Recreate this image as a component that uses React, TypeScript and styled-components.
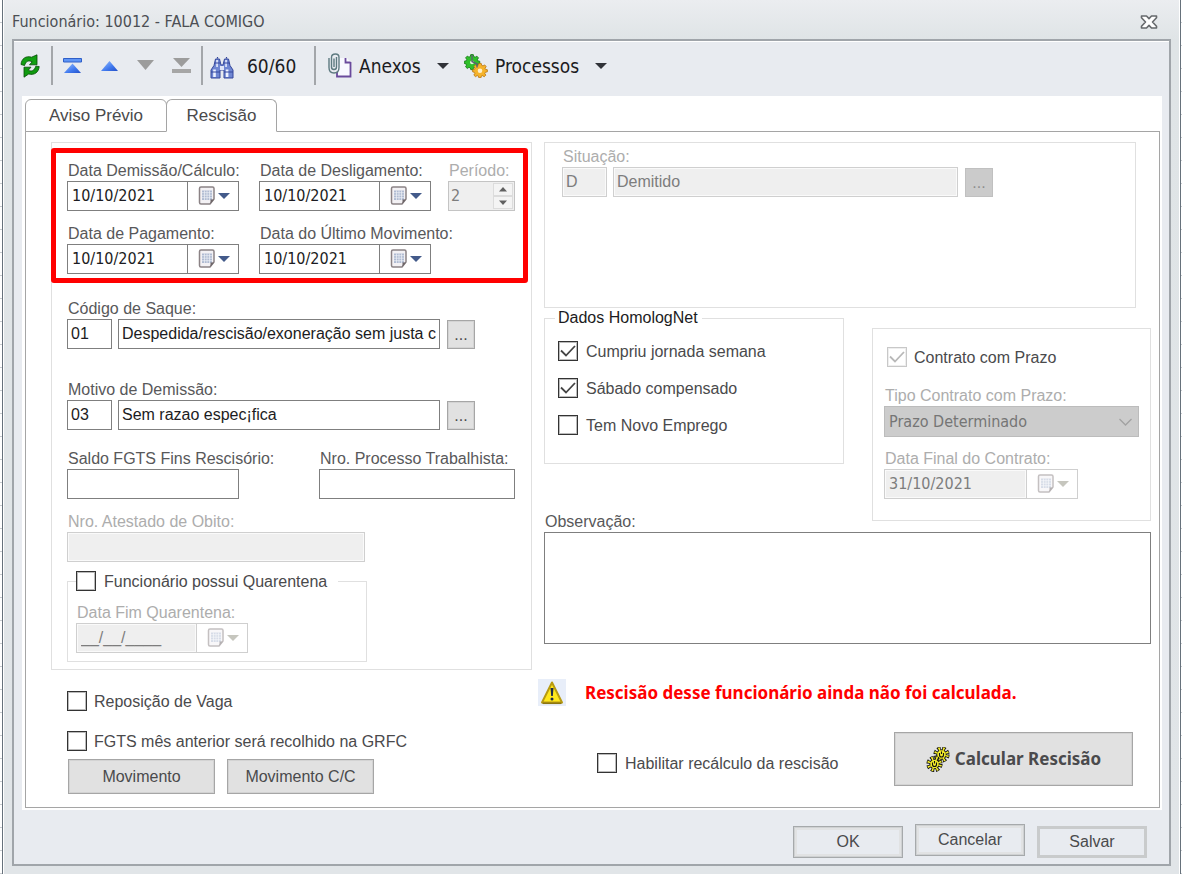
import React, { useId } from "react";
import styled, { createGlobalStyle, css } from "styled-components";

const sans = `"Liberation Sans", Arial, sans-serif`;
const tahoma = `"DejaVu Sans Condensed", Tahoma, sans-serif`;
const strong = `"Noto Sans", Tahoma, sans-serif`;

const GlobalStyle = createGlobalStyle`
  *, *::before, *::after { box-sizing: border-box; }
  body { margin: 0; background: #fff; font: 16px/20px ${sans}; color: #4a4a4c; }
  button, input, select, textarea { font: inherit; margin: 0; border-radius: 0; }
  svg { display: block; flex: none; }
`;

const Desktop = styled.div`
  padding: 0 1px 1px 2px;
  background: repeating-linear-gradient(#fff 0 22px, #c9ccd0 22px 23px);
`;

const Window = styled.main`
  display: flex;
  flex-direction: column;
  min-height: calc(100vh - 1px);
  padding: 0 9px 8px;
  border: solid #66717b;
  border-width: 0 1px;
  background: linear-gradient(#ebedf0, #dfe4e6 40px, #e1e5e8);
  box-shadow: inset 1px 0 #fff, inset -1px 0 #fff;
`;

const TitleBar = styled.header`
  display: flex;
  align-items: center;
  justify-content: space-between;
  height: 39px;
  padding: 4px 13px 0 0;
`;

const Title = styled.h1`
  margin: 0;
  font: 16px/20px ${tahoma};
  color: #4c4f54;
`;

const IconButton = styled.button`
  display: grid;
  place-items: center;
  padding: 0;
  border: 0;
  background: none;
`;

const Frame = styled.div`
  flex: 1;
  padding: 2px 7px 6px 8px;
  border: 2px solid #a0a5aa;
  background: #e8ebf0;
  box-shadow: inset 0 1px #fff;
`;

const Toolbar = styled.div`
  display: flex;
  align-items: center;
  height: 53px;
  margin-left: -2px;
  padding-bottom: 8px;
  font: 19px/20px ${tahoma};
  color: #1c1c22;
`;

const Separator = styled.span<{ $after: number }>`
  width: 2px;
  height: 39px;
  margin: 0 ${(p) => p.$after}px 0 10px;
  background: #a3a6aa;
`;

const ToolButton = styled.button<{ $width?: number; $gap?: number }>`
  display: flex;
  align-items: center;
  gap: ${(p) => p.$gap ?? 7}px;
  width: ${(p) => (p.$width ? `${p.$width}px` : "auto")};
  height: 26px;
  padding: 0;
  border: 0;
  background: none;
  color: inherit;
`;

const Arrow = styled.span`
  margin-left: 9px;
  border: solid transparent;
  border-width: 6px 6px 0;
  border-top-color: #303238;
`;

const Tabs = styled.div`
  padding: 3px 2px 2px 3px;
  background: #fff;
`;

const TabList = styled.div`
  display: flex;
  font-size: 17px;
`;

const Tab = styled.button<{ $width: number; $active?: boolean }>`
  width: ${(p) => p.$width}px;
  height: 33px;
  margin: 0 -1px -1px 0;
  padding: 0;
  border: 1px solid #a5a5a5;
  border-bottom-color: ${(p) => (p.$active ? "#fff" : "#a5a5a5")};
  border-radius: 6px 6px 0 0;
  background: #fff;
  color: #4a4a4c;
  position: relative;
`;

const TabPanel = styled.div`
  display: grid;
  grid-template-columns: 481px 1fr;
  gap: 12px;
  padding: 10px 8px 13px 25px;
  border: 1px solid #a5a5a5;
`;

const Column = styled.div`
  display: flex;
  flex-direction: column;
`;

const box = css`
  border: 1px solid #e0e0e0;
`;

const MainPanel = styled.section`
  ${box}
  padding: 5px 0 7px;
`;

const Highlight = styled.div`
  display: grid;
  grid-template-columns: 172px 172px 64px;
  column-gap: 20px;
  row-gap: 13px;
  margin: 0 3px 0 -1px;
  padding: 8px 0 4px 11px;
  border: 5px solid #f00;
  border-radius: 3px;

  & > :nth-child(3) {
    margin-left: -3px;
  }
`;

const Row = styled.div<{ $top: number; $gap?: number }>`
  display: flex;
  align-items: flex-end;
  gap: ${(p) => p.$gap ?? 6}px;
  margin-top: ${(p) => p.$top}px;
  padding-left: 15px;
`;

const Field = styled.div<{ $width?: number }>`
  display: flex;
  flex-direction: column;
  width: ${(p) => (p.$width ? `${p.$width}px` : "auto")};
`;

const Label = styled.label<{ $muted?: boolean }>`
  padding-left: 1px;
  line-height: 20px;
  white-space: nowrap;
  color: ${(p) => (p.$muted ? "#adadad" : "#58585a")};
`;

const TextInput = styled.input<{ $width?: number }>`
  flex: none;
  width: ${(p) => (p.$width ? `${p.$width}px` : "100%")};
  height: 30px;
  padding: 0 3px;
  border: 1px solid #7f7f7f;
  background: #fff;
  color: #1c1c22;

  &:disabled {
    border-color: #cfcfcf;
    background: #efefef;
    box-shadow: inset 0 0 0 1px #fafafa;
    color: #7d7d7d;
  }
`;

const DateBox = styled.div<{ $disabled?: boolean }>`
  display: flex;
  height: 30px;
  border: 1px solid ${(p) => (p.$disabled ? "#cfcfcf" : "#7f7f7f")};
`;

const DateInput = styled.input<{ $blank?: boolean }>`
  flex: 1;
  min-width: 0;
  padding: 0 4px;
  border: 0;
  background: #fff;
  font: 16px/20px ${(p) => (p.$blank ? sans : tahoma)};
  color: #1c1c22;

  &:disabled {
    background: #efefef;
    box-shadow: inset 0 0 0 1px #fafafa;
    color: #7d7d7d;
  }
`;

const DateButton = styled.button`
  display: flex;
  align-items: center;
  gap: 2px;
  width: 51px;
  padding: 0 0 0 10px;
  border: 0;
  border-left: 1px solid #7f7f7f;
  background: #fff;

  &:disabled {
    border-color: #cfcfcf;
  }
  &:disabled svg {
    opacity: 0.5;
  }
`;

const DateArrow = styled.span<{ $disabled?: boolean }>`
  border: solid transparent;
  border-width: 6px 6px 0;
  border-top-color: ${(p) => (p.$disabled ? "#c6c6be" : "#435a8a")};
`;

const Spin = styled.div`
  display: flex;
  height: 30px;
  padding: 1px;
  border: 1px solid #c4c4c4;
  background: #efefef;
  color: #7d7d7d;
`;

const SpinInput = styled.input`
  flex: 1;
  min-width: 0;
  padding: 0 0 0 1px;
  border: 0;
  background: none;
  color: inherit;
  font: 16px/20px ${tahoma};
  appearance: textfield;

  &::-webkit-inner-spin-button {
    display: none;
  }
`;

const SpinButtons = styled.div`
  display: grid;
  width: 20px;
`;

const SpinButton = styled.button`
  display: grid;
  place-items: center;
  padding: 0;
  border: 1px solid #dcdcdc;
  background: #f4f4f4;
`;

const Button = styled.button<{ $width: number; $height?: number }>`
  display: flex;
  align-items: center;
  justify-content: center;
  gap: 5px;
  flex: none;
  width: ${(p) => p.$width}px;
  height: ${(p) => p.$height ?? 35}px;
  padding: 0;
  border: 1px solid #a6a6a6;
  background: #e1e1e1;
  box-shadow: inset 0 0 0 1px #d3d3d3;
  color: #4a4a4c;
`;

const MoreButton = styled(Button)`
  margin-left: 1px;

  &:disabled {
    border-color: #c0c0c0;
    background: #cbcbcb;
    box-shadow: none;
    color: #8f8f8f;
  }
`;

const CheckLine = styled.div<{ $gap?: number }>`
  display: flex;
  align-items: center;
  gap: ${(p) => p.$gap ?? 7}px;
  height: 20px;
`;

const CheckStack = styled.span`
  display: grid;
  flex: none;
  width: 20px;
  height: 20px;

  & > * {
    grid-area: 1 / 1;
    width: 20px;
    height: 20px;
  }
  & > svg {
    pointer-events: none;
    visibility: hidden;
  }
  & > input:checked + svg {
    visibility: visible;
  }
`;

const CheckInput = styled.input`
  appearance: none;
  border: 1px solid #333;
  outline: 1px solid #bbb;
  outline-offset: -2px;
  background: #fff;

  &:disabled {
    border-color: #c8c8c8;
    outline-color: #eee;
  }
`;

const CheckLabel = styled.label`
  padding-top: 1px;
  white-space: nowrap;
`;

const Quarantine = styled.fieldset`
  ${box}
  width: 300px;
  margin: 9px 0 0 15px;
  padding: 12px 8px 8px;

  legend {
    padding: 0 11px 0 0;
  }
`;

const Situation = styled.section`
  ${box}
  height: 166px;
  margin-right: 15px;
  padding: 4px 17px;
`;

const LookupRow = styled.div`
  display: flex;
  align-items: flex-end;
  gap: 6px;
`;

const Middle = styled.div`
  display: flex;
  gap: 28px;
`;

const Homolog = styled.fieldset`
  ${box}
  display: flex;
  flex-direction: column;
  gap: 17px;
  width: 300px;
  height: 156px;
  margin: 0 0 48px;
  padding: 13px 13px 0;

  legend {
    margin-left: -3px;
    padding: 0 4px 0 3px;
    color: #1c1c22;
  }
`;

const Contract = styled.section`
  ${box}
  flex: 1;
  margin: 20px 0 11px;
  padding: 18px 11px 0;
`;

const ContractHeader = styled.div`
  padding: 0 3px 19px;
`;

const SelectStack = styled.div`
  display: grid;
  align-items: center;
  margin-bottom: 12px;

  & > * {
    grid-area: 1 / 1;
  }
  & > svg {
    justify-self: end;
    margin-right: 7px;
    pointer-events: none;
  }
`;

const Select = styled.select`
  appearance: none;
  width: 100%;
  height: 31px;
  padding: 0 4px;
  border: 1px solid #bcbcbc;
  background: #cccccc;
  color: #757575;
  opacity: 1;
  font: 16px/20px ${tahoma};
`;

const TextArea = styled.textarea`
  display: block;
  width: 100%;
  height: 112px;
  padding: 4px;
  border: 1px solid #7f7f7f;
  background: #fff;
  resize: none;
`;

const Options = styled.div`
  display: flex;
  flex-direction: column;
  gap: 20px;
  padding: 21px 0 8px 16px;
`;

const ButtonPair = styled.div`
  display: flex;
  gap: 12px;
  padding-left: 17px;
`;

const Alert = styled.p`
  display: flex;
  align-items: center;
  gap: 19px;
  margin: 35px 0 26px -6px;
  font: bold 17px/27px ${strong};
  color: #f00;
`;

const IconTile = styled.span`
  padding: 1px 2px;
  background: #e8eef9;
`;

const CalcRow = styled.div`
  display: flex;
  align-items: flex-end;
  justify-content: space-between;
  padding: 0 18px 0 53px;

  & > :first-child {
    margin-bottom: 13px;
  }
`;

const CalcButton = styled(Button)`
  font: bold 17px/20px ${strong};
`;

const Footer = styled.footer`
  display: flex;
  justify-content: flex-end;
  gap: 12px;
  padding: 14px 15px 0 0;
`;

const DialogButton = styled.button<{ $strong?: boolean; $raised?: boolean }>`
  width: 110px;
  height: 32px;
  margin-top: ${(p) => (p.$raised ? 0 : 2)}px;
  padding: 0;
  border: ${(p) => (p.$strong ? "3px solid #c9cbcc" : "1px solid #a6a9ab")};
  background: #e8ebf0;
  box-shadow: ${(p) => (p.$strong ? "none" : "inset 0 0 0 1px #cfd1d2, inset 0 0 0 3px #e1e2e3")};
  color: #4a4a4c;
`;

const CloseIcon = () => (
  <svg width="18" height="14" viewBox="0 0 18 14">
    <path
      d="M1.500 1h5L9 3.600 11.500 1h5v1.800L12.500 7l4 4.200V13h-5L9 10.400 6.500 13h-5v-1.800l4-4.200-4-4.200z"
      fill="#fff"
      stroke="#66696c"
      strokeWidth="1.600"
      strokeLinejoin="round"
    />
  </svg>
);

const RefreshIcon = () => (
  <svg width="21" height="24" viewBox="0 0 21 24">
    <path d="M1 10.500C1.500 4.500 6 1.500 11.500 3.200L17 .8v10H9.500l2.700-3C8.500 6 6 7 4.500 11.500z" fill="#12a012" stroke="#064a06" strokeWidth=".8" />
    <path d="M19.200 12.500c-.5 6-5 9-10.500 7.500L4 23.200v-10h7l-2.700 3c3.500 1.800 6 .5 7.500-4z" fill="#0f9a0f" stroke="#064a06" strokeWidth=".8" />
  </svg>
);

const BlueGradient = ({ id }: { id: string }) => (
  <linearGradient id={id} x1="0" y1="0" x2="1" y2="1">
    <stop offset="0" stopColor="#9cc4ff" />
    <stop offset=".6" stopColor="#3f78ee" />
    <stop offset="1" stopColor="#2450c8" />
  </linearGradient>
);

const FirstIcon = () => (
  <svg width="19" height="16" viewBox="0 0 19 16">
    <defs><BlueGradient id="first-blue" /></defs>
    <path d="M.5.5h18v3.500H.5z" fill="#5f95f5" stroke="#2f5fc8" />
    <path d="M9.500 5.500 18 15H1z" fill="url(#first-blue)" />
  </svg>
);

const PreviousIcon = () => (
  <svg width="17" height="10" viewBox="0 0 17 10">
    <defs><BlueGradient id="previous-blue" /></defs>
    <path d="M8.500 0 17 10H0z" fill="url(#previous-blue)" />
  </svg>
);

const NextIcon = () => (
  <svg width="17" height="12" viewBox="0 0 17 12">
    <path d="M0 0h17L8.500 10z" fill="#9c9c9c" />
  </svg>
);

const LastIcon = () => (
  <svg width="19" height="16" viewBox="0 0 19 16">
    <path d="M1 0h17L9.500 9z" fill="#9c9c9c" />
    <path d="M0 11h19v4H0z" fill="#a6a6a6" />
  </svg>
);

const BinocularsIcon = () => (
  <svg width="24" height="26" viewBox="0 -4 24 26">
    <path d="M5.500 2 4 8.500 1 13v8h9v-8h4v8h9v-8l-3-4.500L18.500 2h-4L13 8h-2L9.500 2z" fill="#6f86d2" stroke="#34479c" strokeLinejoin="round" />
    <path d="M3.200 12.500h2.600V20H3.200zM15.800 12.500h2.600V20h-2.600zM6.300 3h1.500v7H6.300zM15.300 3h1.500v7h-1.500z" fill="#eef2ff" />
    <path d="M7.500 1.500V0M16.500 1.500V0M1 15h9M14 15h9M5 6h5M14 6h5" stroke="#34479c" strokeWidth="1.200" />
    <path d="M10 9h4v4h-4z" fill="#dfe5f8" />
  </svg>
);

const AttachIcon = () => (
  <svg width="24" height="25" viewBox="0 0 24 25">
    <path d="M9.500 5H19l3.500 4v14.500h-13z" fill="#f8f8ff" />
    <path d="M17.500 5v4.500h5M22.500 9v14.500H9V19" fill="none" stroke="#6a4a9c" strokeWidth="1.800" />
    <path d="M3.500 4.500v9.500a2.500 2.500 0 0 0 5 0V4M6 14V5.500M1 5v9.500C1 19 3 20 6 20s5-1.500 5-5.500V4.500C11 2 9.500 1 7.500 1S3.500 2 3.500 4.500" fill="none" stroke="#5e7a80" strokeWidth="1.400" />
  </svg>
);

const gearPath =
  "M-1.500-8h3l.6 2.300 1.600.7L5.700-6.200l1.800 2L6.200-2l.6 1.300L9-.3v2.500l-2.400.6-.7 1.500 1.200 2-2 1.900-2-1.300-1.500.6L1.200 9.500h-2.600L-2 7.400l-1.500-.6-2 1.300-2-1.900 1.200-2L-7 2.800-9 2.200V-.3l2.300-.5.6-1.500-1.300-2 2-2 1.900 1.300L-2-5.700z";

const ProcessIcon = () => (
  <svg width="24" height="24" viewBox="0 0 24 24">
    <g transform="translate(8 7.500) scale(.86)">
      <path d={gearPath} fill="#2fc02a" stroke="#177a17" />
      <circle r="2.300" cy="1" fill="#dff2dc" />
    </g>
    <g transform="translate(16 16) scale(.82)">
      <path d={gearPath} fill="#f5b32c" stroke="#b9740f" />
      <circle r="2.800" cy="1" fill="#fff0cc" />
    </g>
    <path d="M8 1v6.500l5 2.500v3.500" fill="none" stroke="#5b6270" strokeWidth="1.400" />
  </svg>
);

const CalendarIcon = () => (
  <svg width="18" height="20" viewBox="0 0 18 20">
    <path d="M3 1h11.500a1.500 1.500 0 0 1 1.500 1.500V13l-4 5H3a1.500 1.500 0 0 1-1.500-1.500v-14A1.500 1.500 0 0 1 3 1z" fill="#f3f1f4" stroke="#8b8285" strokeWidth="1.500" />
    <path d="M4 4.500h10V14H4z" fill="#b0bbd2" />
    <path d="M4 6.700h10M4 9.200h10M4 11.700h10M6.500 4.500V14M9 4.500V14M11.500 4.500V14" stroke="#eef0f6" strokeWidth=".7" />
    <path d="M16 13.500h-3.500V18z" fill="#6e6669" />
  </svg>
);

const WarningIcon = () => (
  <svg width="24" height="25" viewBox="0 0 24 25">
    <path d="M12 2.500 22 22.500H2z" fill="#ffe71c" stroke="#b89b12" strokeWidth="2" strokeLinejoin="round" />
    <path d="M2.500 23.300h19" stroke="#8b7510" strokeWidth="1.500" />
    <path d="M10.500 8h3l-.7 8h-1.600z" fill="#1d2a4a" />
    <circle cx="12" cy="19" r="1.500" fill="#1d2a4a" />
  </svg>
);

const GearsIcon = () => (
  <svg width="24" height="25" viewBox="0 0 24 25">
    {[[15.500, 7.500], [8.500, 17]].map(([x, y]) => (
      <g key={x} transform={`translate(${x} ${y})`}>
        <circle r="6.300" fill="none" stroke="#111" strokeWidth="3.600" strokeDasharray="3.300 1.650" />
        <circle r="5.200" fill="#111" />
        <circle r="4.200" fill="#f4ec2a" />
        <circle r="5.700" fill="none" stroke="#f4ec2a" strokeWidth="3.400" strokeDasharray="1.500 2.977" strokeDashoffset="-.8" />
        <path d="M-2-1.500V.5a2 2 0 0 0 4 0v-2M0-3V-.5" fill="none" stroke="#111" strokeWidth="1.100" />
      </g>
    ))}
  </svg>
);

const SpinArrow = ({ down }: { down?: boolean }) => (
  <svg width="8" height="5" viewBox="0 0 8 5">
    <path d={down ? "M0 .5h8L4 5z" : "M0 4.500h8L4 0z"} fill="#606060" />
  </svg>
);

type CheckProps = { label: string; checked?: boolean; disabled?: boolean; gap?: number };

function Check({ label, checked, disabled, gap }: CheckProps) {
  const id = useId();
  return (
    <CheckLine $gap={gap}>
      <CheckStack>
        <CheckInput id={id} type="checkbox" defaultChecked={checked} disabled={disabled} />
        <svg viewBox="0 0 20 20">
          <path d="M3 9.500 8 14.500 17 5" fill="none" stroke={disabled ? "#b8b8b8" : "#444"} strokeWidth="1.800" />
        </svg>
      </CheckStack>
      <CheckLabel htmlFor={id}>{label}</CheckLabel>
    </CheckLine>
  );
}

type DateProps = { label: string; value: string; width?: number; disabled?: boolean };

function DateField({ label, value, width, disabled }: DateProps) {
  const id = useId();
  return (
    <Field $width={width}>
      <Label htmlFor={id} $muted={disabled}>{label}</Label>
      <DateBox $disabled={disabled}>
        <DateInput id={id} defaultValue={value} disabled={disabled} $blank={value.startsWith("_")} />
        <DateButton type="button" aria-label={`Calendário: ${label}`} disabled={disabled}>
          <CalendarIcon />
          <DateArrow $disabled={disabled} />
        </DateButton>
      </DateBox>
    </Field>
  );
}

type TextProps = { label: string; width: number; disabled?: boolean };

function TextField({ label, width, disabled }: TextProps) {
  const id = useId();
  return (
    <Field $width={width}>
      <Label htmlFor={id} $muted={disabled}>{label}</Label>
      <TextInput id={id} disabled={disabled} />
    </Field>
  );
}

type LookupProps = { label: string; code: string; text: string; disabled?: boolean };

function Lookup({ label, code, text, disabled }: LookupProps) {
  const id = useId();
  const descriptionWidth = disabled ? 345 : 322;
  return (
    <Field>
      <Label htmlFor={id} $muted={disabled}>{label}</Label>
      <LookupRow>
        <TextInput id={id} $width={45} defaultValue={code} disabled={disabled} />
        <TextInput aria-label={`Descrição: ${label}`} $width={descriptionWidth} defaultValue={text} disabled={disabled} />
        <MoreButton type="button" $width={28} $height={29} disabled={disabled}>...</MoreButton>
      </LookupRow>
    </Field>
  );
}

export default function App() {
  return (
    <Desktop>
      <GlobalStyle />
      <Window>
        <TitleBar>
          <Title>Funcionário: 10012 - FALA COMIGO</Title>
          <IconButton type="button" aria-label="Fechar"><CloseIcon /></IconButton>
        </TitleBar>
        <Frame>
          <Toolbar>
            <ToolButton aria-label="Atualizar"><RefreshIcon /></ToolButton>
            <Separator $after={10} />
            <ToolButton aria-label="Primeiro" $width={38}><FirstIcon /></ToolButton>
            <ToolButton aria-label="Anterior" $width={36}><PreviousIcon /></ToolButton>
            <ToolButton aria-label="Próximo" $width={35}><NextIcon /></ToolButton>
            <ToolButton aria-label="Último"><LastIcon /></ToolButton>
            <Separator $after={7} />
            <ToolButton $width={94} $gap={13}><BinocularsIcon />60/60</ToolButton>
            <Separator $after={12} />
            <ToolButton $width={136}><AttachIcon />Anexos<Arrow /></ToolButton>
            <ToolButton><ProcessIcon />Processos<Arrow /></ToolButton>
          </Toolbar>

          <Tabs>
            <TabList role="tablist">
              <Tab role="tab" $width={142}>Aviso Prévio</Tab>
              <Tab role="tab" $width={111} $active aria-selected>Rescisão</Tab>
            </TabList>
            <TabPanel role="tabpanel">
              <Column>
                <MainPanel>
                  <Highlight>
                    <DateField label="Data Demissão/Cálculo:" value="10/10/2021" />
                    <DateField label="Data de Desligamento:" value="10/10/2021" />
                    <Field>
                      <Label htmlFor="periodo" $muted>Período:</Label>
                      <Spin>
                        <SpinInput id="periodo" type="number" defaultValue={2} disabled />
                        <SpinButtons>
                          <SpinButton type="button" aria-label="Aumentar" disabled><SpinArrow /></SpinButton>
                          <SpinButton type="button" aria-label="Diminuir" disabled><SpinArrow down /></SpinButton>
                        </SpinButtons>
                      </Spin>
                    </Field>
                    <DateField label="Data de Pagamento:" value="10/10/2021" />
                    <DateField label="Data do Último Movimento:" value="10/10/2021" />
                  </Highlight>
                  <Row $top={16}>
                    <Lookup label="Código de Saque:" code="01" text="Despedida/rescisão/exoneração sem justa causa" />
                  </Row>
                  <Row $top={31}>
                    <Lookup label="Motivo de Demissão:" code="03" text="Sem razao espec¡fica" />
                  </Row>
                  <Row $top={19} $gap={80}>
                    <TextField label="Saldo FGTS Fins Rescisório:" width={172} />
                    <TextField label="Nro. Processo Trabalhista:" width={196} />
                  </Row>
                  <Row $top={13}>
                    <TextField label="Nro. Atestado de Obito:" width={298} disabled />
                  </Row>
                  <Quarantine>
                    <legend><Check label="Funcionário possui Quarentena" gap={8} /></legend>
                    <DateField label="Data Fim Quarentena:" value="__/__/____" width={172} disabled />
                  </Quarantine>
                </MainPanel>
                <Options>
                  <Check label="Reposição de Vaga" />
                  <Check label="FGTS mês anterior será recolhido na GRFC" />
                </Options>
                <ButtonPair>
                  <Button type="button" $width={147}>Movimento</Button>
                  <Button type="button" $width={147}>Movimento C/C</Button>
                </ButtonPair>
              </Column>

              <Column>
                <Situation>
                  <Lookup label="Situação:" code="D" text="Demitido" disabled />
                </Situation>
                <Middle>
                  <div>
                    <Homolog>
                      <legend>Dados HomologNet</legend>
                      <Check label="Cumpriu jornada semana" checked gap={8} />
                      <Check label="Sábado compensado" checked gap={8} />
                      <Check label="Tem Novo Emprego" gap={8} />
                    </Homolog>
                    <Label htmlFor="observacao">Observação:</Label>
                  </div>
                  <Contract>
                    <ContractHeader>
                      <Check label="Contrato com Prazo" checked disabled />
                    </ContractHeader>
                    <Field>
                      <Label htmlFor="tipo" $muted>Tipo Contrato com Prazo:</Label>
                      <SelectStack>
                        <Select id="tipo" disabled><option>Prazo Determinado</option></Select>
                        <svg width="13" height="8" viewBox="0 0 13 8">
                          <path d="M.5 1l6 6 6-6" fill="none" stroke="#a2a2a2" strokeWidth="1.300" />
                        </svg>
                      </SelectStack>
                    </Field>
                    <DateField label="Data Final do Contrato:" value="31/10/2021" width={194} disabled />
                  </Contract>
                </Middle>
                <TextArea id="observacao" />
                <Alert role="alert">
                  <IconTile><WarningIcon /></IconTile>
                  Rescisão desse funcionário ainda não foi calculada.
                </Alert>
                <CalcRow>
                  <Check label="Habilitar recálculo da rescisão" gap={8} />
                  <CalcButton type="button" $width={239} $height={54}><GearsIcon />Calcular Rescisão</CalcButton>
                </CalcRow>
              </Column>
            </TabPanel>
          </Tabs>

          <Footer>
            <DialogButton type="button">OK</DialogButton>
            <DialogButton type="button" $raised>Cancelar</DialogButton>
            <DialogButton type="button" $strong>Salvar</DialogButton>
          </Footer>
        </Frame>
      </Window>
    </Desktop>
  );
}
